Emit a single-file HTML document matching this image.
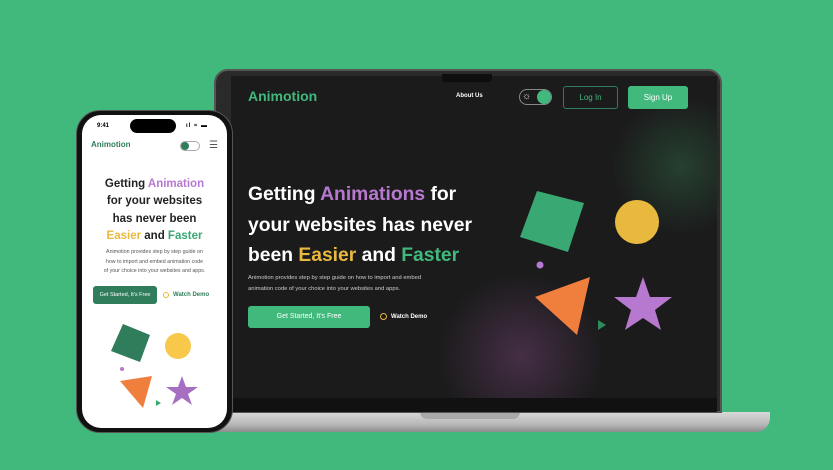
<!DOCTYPE html><html><head><style>
*{margin:0;padding:0;box-sizing:border-box}
body{width:833px;height:470px;background:#41b97d;position:relative;overflow:hidden;font-family:"Liberation Sans",sans-serif}
.a{position:absolute}
</style></head><body>
<div class="a" style="left:198px;top:412px;width:572px;height:20px;background:linear-gradient(#d9d9d9,#b9b9b9 60%,#8d8d8d);border-radius:0 0 14px 14px"></div>
<div class="a" style="left:420px;top:412px;width:100px;height:7px;background:#a9a9a9;border-radius:0 0 8px 8px"></div>
<div class="a" style="left:214px;top:69px;width:508px;height:344px;background:#2a2a2a;border-radius:14px 14px 0 0;border:2px solid #555"></div>
<div class="a" style="left:231px;top:76px;width:486px;height:322px;background:#1b1b1c;overflow:hidden">
 <div class="a" style="left:200px;top:190px;width:180px;height:180px;border-radius:50%;background:radial-gradient(circle,rgba(120,70,120,.45),rgba(0,0,0,0) 65%)"></div>
 <div class="a" style="left:370px;top:20px;width:160px;height:140px;border-radius:50%;background:radial-gradient(circle,rgba(50,110,70,.45),rgba(0,0,0,0) 65%)"></div>
</div>
<div class="a" style="left:442px;top:74px;width:50px;height:8px;background:#0e0e0e;border-radius:0 0 3px 3px"></div>
<div class="a" style="left:231px;top:398px;width:486px;height:14px;background:#111"></div>
<div class="a" style="left:248px;top:88px;color:#41b97d;font-size:14px;font-weight:bold">Animotion</div>
<div class="a" style="left:456px;top:93px;color:#fff;font-size:6px;font-weight:bold">About Us</div>
<div class="a" style="left:519px;top:89px;width:33px;height:16px;border:1px solid #888;border-radius:8px"></div>
<div class="a" style="left:522px;top:91px;color:#ddd;font-size:10px;line-height:12px">☼</div>
<div class="a" style="left:537px;top:90px;width:14px;height:14px;background:#41b97d;border-radius:50%"></div>
<div class="a" style="left:563px;top:86px;width:55px;height:23px;border:1px solid #2f7d5a;border-radius:3px;color:#41b97d;font-size:8px;text-align:center;line-height:21px">Log In</div>
<div class="a" style="left:628px;top:86px;width:60px;height:23px;background:#41b97d;border-radius:3px;color:#fff;font-size:8px;text-align:center;line-height:23px">Sign Up</div>
<div class="a" style="left:248px;top:180px;color:#fff;font-size:19.3px;font-weight:bold;line-height:30.5px;white-space:nowrap">Getting <span style="color:#b779cf">Animations</span> for<br>your websites has never<br>been <span style="color:#e9b93f">Easier</span> and <span style="color:#41b97d">Faster</span></div>
<div class="a" style="left:248px;top:273px;color:#ccc;font-size:5.8px;line-height:11px;white-space:nowrap">Animotion provides step by step guide on how to import and embed<br>animation code of your choice into your websites and apps.</div>
<div class="a" style="left:248px;top:306px;width:122px;height:22px;background:#41b97d;border-radius:3px;color:#fff;font-size:7px;text-align:center;line-height:22px">Get Started, It's Free</div>
<div class="a" style="left:380px;top:313px;width:7px;height:7px;border:1px solid #e9b93f;border-radius:50%"></div>
<div class="a" style="left:391px;top:313.5px;color:#fff;font-size:6px;font-weight:bold">Watch Demo</div>
<svg class="a" style="left:0;top:0" width="833" height="470">
 <polygon points="537,191 584,203 568,252 520,237" fill="#3aa873"/>
 <circle cx="637" cy="222" r="22" fill="#e9b93f"/>
 <circle cx="540" cy="265" r="3.5" fill="#b779cf"/>
 <polygon points="535,297 590,277 577,335" fill="#f07f3d"/>
 <polygon points="598,320 606,325 598,330" fill="#2f8a5c"/>
 <polygon points="643,277 650,297 672,297 655,310 661,330 643,318 625,330 631,310 614,297 636,297" fill="#b779cf"/>
</svg>
<div class="a" style="left:76px;top:110px;width:157px;height:323px;background:#111;border-radius:24px;border:1px solid #555"></div>
<div class="a" style="left:82px;top:115px;width:145px;height:313px;background:#fff;border-radius:19px"></div>
<div class="a" style="left:130px;top:119px;width:46px;height:14px;background:#000;border-radius:7px"></div>
<div class="a" style="left:97px;top:123px;font-size:6px;font-weight:bold">9:41</div>
<div class="a" style="left:186px;top:123px;font-size:6px;font-weight:bold;letter-spacing:1px">ıl ≈ ▬</div>
<div class="a" style="left:91px;top:140px;color:#2f7d5a;font-size:8px;font-weight:bold">Animotion</div>
<div class="a" style="left:180px;top:141px;width:20px;height:10px;border:1px solid #aaa;border-radius:5px"></div>
<div class="a" style="left:181px;top:142px;width:8px;height:8px;background:#2f7d5a;border-radius:50%"></div>
<div class="a" style="left:209px;top:140px;font-size:10px;color:#555">☰</div>
<div class="a" style="left:82px;top:176px;width:145px;text-align:center;color:#222;font-size:11.5px;font-weight:bold;line-height:17.3px">Getting <span style="color:#b779cf">Animation</span><br>for your websites<br>has never been<br><span style="color:#e9b93f">Easier</span> and <span style="color:#3aa873">Faster</span></div>
<div class="a" style="left:82px;top:248px;width:145px;text-align:center;color:#555;font-size:5.3px;line-height:9.5px">Animotion provides step by step guide on<br>how to import and embed animation code<br>of your choice into your websites and apps.</div>
<div class="a" style="left:93px;top:286px;width:64px;height:18px;background:#2f7d5a;border-radius:3px;color:#fff;font-size:5.5px;text-align:center;line-height:18px">Get Started, It's Free</div>
<div class="a" style="left:163px;top:292px;width:6px;height:6px;border:1px solid #e9b93f;border-radius:50%"></div>
<div class="a" style="left:173px;top:292px;color:#2f7d5a;font-size:6px;font-weight:bold">Watch Demo</div>
<svg class="a" style="left:0;top:0" width="833" height="470">
 <polygon points="123,324 150,335 140,362 111,351" fill="#2f7d5a"/>
 <circle cx="178" cy="346" r="13" fill="#f7c84a"/>
 <circle cx="122" cy="369" r="2" fill="#b779cf"/>
 <polygon points="120,381 152,376 143,408" fill="#f07f3d"/>
 <polygon points="156,400 161,403 156,406" fill="#3aa873"/>
 <polygon points="182,376 186,387 198,387 188,394 192,405 182,398 172,405 176,394 166,387 178,387" fill="#a66fc1"/>
</svg>
</body></html>
